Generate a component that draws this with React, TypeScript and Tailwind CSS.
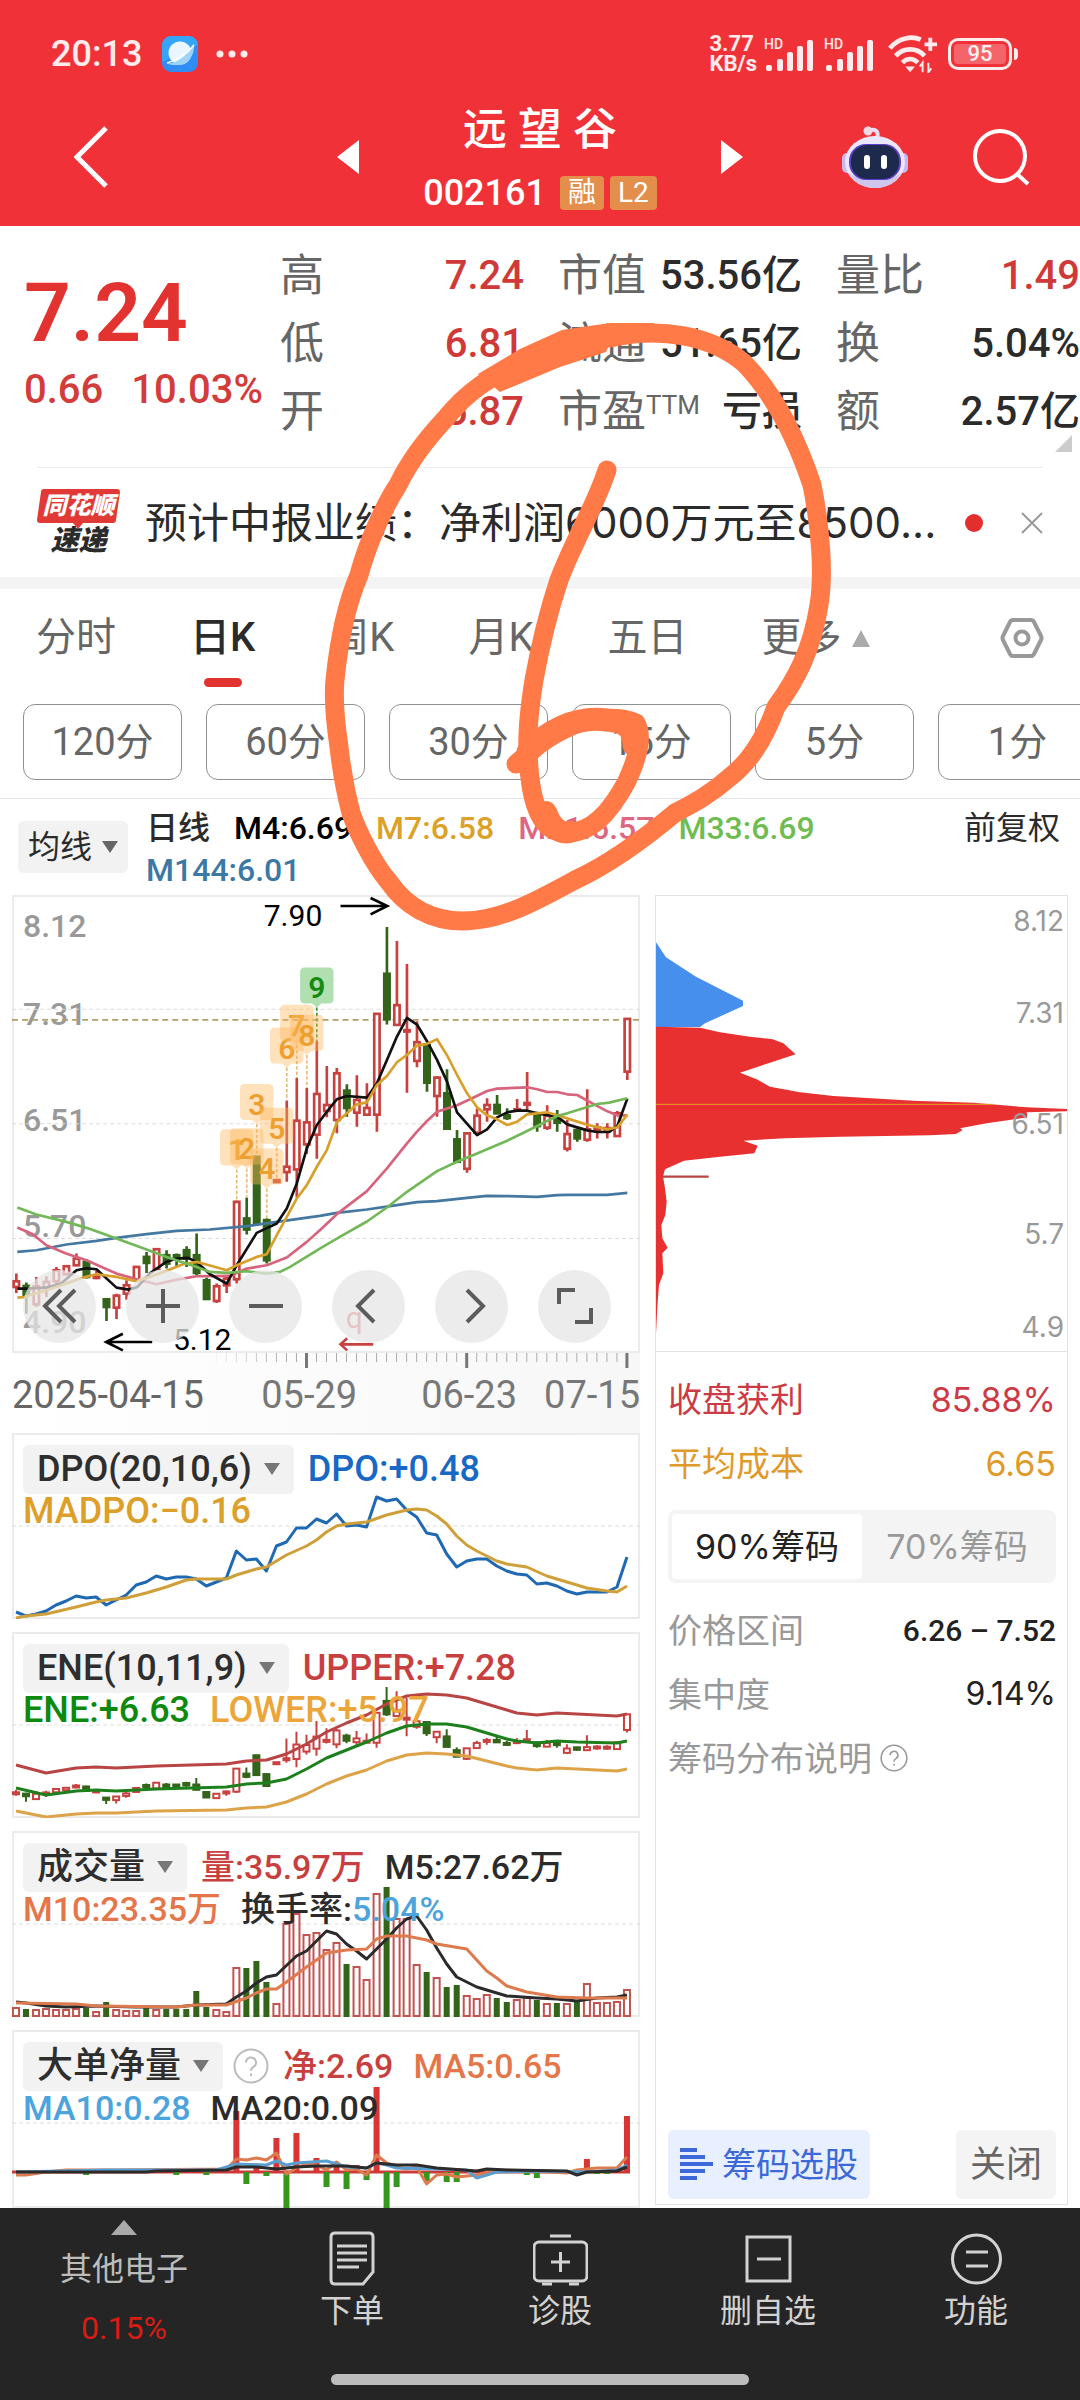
import { ReactNode } from 'react';
import clsx from 'clsx';

// [high, low, body top, body bottom, falling day]
type Candle = [number, number, number, number, number?];

const candles: Candle[] = [
  [1180, 1238, 1203, 1220],
  [1207, 1300, 1217, 1243, 1],
  [1190, 1280, 1218, 1272],
  [1188, 1250, 1205, 1222],
  [1160, 1215, 1170, 1203],
  [1155, 1185, 1158, 1182],
  [1120, 1158, 1135, 1155],
  [1137, 1195, 1145, 1190, 1],
  [1170, 1197, 1185, 1193],
  [1257, 1322, 1257, 1280, 1],
  [1240, 1316, 1246, 1282],
  [1200, 1258, 1215, 1240],
  [1158, 1205, 1160, 1200],
  [1115, 1178, 1130, 1148, 1],
  [1105, 1168, 1107, 1166],
  [1110, 1165, 1125, 1150, 1],
  [1120, 1157, 1125, 1135, 1],
  [1098, 1160, 1110, 1135, 1],
  [1060, 1185, 1125, 1178, 1],
  [1192, 1256, 1200, 1256, 1],
  [1210, 1268, 1218, 1262],
  [1185, 1238, 1195, 1215],
  [962, 1210, 965, 1197],
  [953, 1063, 1015, 1048, 1],
  [830, 1030, 830, 1030, 1],
  [1015, 1150, 1020, 1140, 1],
  [898, 908, 900, 906],
  [662, 905, 860, 876],
  [594, 952, 722, 868],
  [624, 822, 727, 793],
  [484, 836, 642, 764],
  [558, 712, 675, 693],
  [564, 760, 580, 720],
  [613, 710, 632, 684, 1],
  [586, 740, 660, 698],
  [610, 706, 684, 704],
  [400, 755, 402, 704],
  [142, 434, 282, 418, 1],
  [184, 436, 376, 435],
  [253, 638, 451, 455],
  [424, 562, 487, 543],
  [490, 635, 495, 608, 1],
  [588, 710, 593, 648],
  [568, 746, 640, 746, 1],
  [750, 845, 778, 845, 1],
  [757, 878, 760, 866],
  [685, 765, 707, 758],
  [655, 725, 675, 688],
  [645, 702, 675, 700, 1],
  [685, 720, 706, 714, 1],
  [657, 692, 688, 692],
  [576, 690, 669, 674],
  [695, 755, 700, 738, 1],
  [676, 750, 707, 743],
  [690, 755, 706, 728, 1],
  [720, 814, 762, 806],
  [745, 785, 750, 775, 1],
  [628, 785, 748, 779],
  [730, 775, 742, 750],
  [730, 775, 744, 753],
  [693, 770, 700, 768],
  [415, 600, 417, 575],
];

const averages = [
  { color: '#4478a0', points: '54,1115 111,1110 201,1093 291,1082 351,1073 441,1062 531,1052 631,1048 741,1038 831,1025 960,1007 1011,998 1101,988 1191,975 1251,966 1311,963 1401,953 1461,947 1521,948 1611,950 1671,945 1701,944 1821,944 1881,938' },
  { color: '#d8637c', points: '54,1042 100,1062 141,1095 200,1120 261,1140 351,1180 411,1197 471,1212 531,1198 591,1188 691,1187 741,1165 801,1155 861,1132 921,1085 960,1050 1011,1002 1101,933 1161,865 1221,790 1251,755 1281,723 1311,695 1371,676 1410,658 1461,633 1491,626 1581,622 1611,628 1641,636 1671,636 1701,643 1731,645 1761,662 1821,694 1851,706 1881,706' },
  { color: '#111111', points: '54,1225 81,1225 141,1222 185,1210 231,1170 261,1164 291,1167 351,1222 388,1228 414,1220 450,1180 500,1145 531,1135 565,1133 591,1145 631,1182 681,1210 711,1155 771,1058 831,1030 861,985 891,910 921,805 951,735 985,690 1011,658 1041,648 1101,653 1131,610 1161,540 1191,470 1221,414 1251,434 1281,484 1311,540 1341,605 1371,697 1431,765 1461,748 1491,712 1521,697 1551,692 1581,692 1611,700 1671,710 1701,733 1761,751 1791,756 1827,756 1851,738 1881,656' },
  { color: '#d8a02a', points: '54,1252 75,1250 141,1230 200,1210 250,1192 291,1182 351,1190 411,1203 450,1190 500,1172 550,1152 591,1145 631,1156 681,1170 711,1155 771,1130 801,1122 831,1065 861,1010 891,955 921,915 951,860 981,810 1011,727 1041,700 1071,673 1101,667 1131,615 1161,588 1191,547 1221,525 1251,497 1281,492 1311,478 1341,526 1371,585 1401,640 1431,682 1461,706 1491,718 1521,735 1551,725 1581,703 1641,697 1701,715 1761,734 1821,748 1851,742 1881,704' },
  { color: '#73b858', points: '54,982 111,1003 201,1025 261,1043 351,1075 441,1108 501,1130 591,1160 631,1175 681,1178 741,1173 801,1180 841,1175 871,1160 960,1105 1011,1075 1041,1058 1101,1024 1161,982 1221,935 1311,873 1371,845 1431,820 1521,782 1581,753 1671,708 1701,700 1791,672 1827,668 1881,655' },
];

// bar index and top of each countdown badge
const badges = [
  [22, 748], [23, 745], [24, 612], [25, 805], [26, 683], [27, 443], [28, 375], [29, 405], [30, 263],
];

const volumes = [
  10, 8, 8, 9, 8, 8, 9, 9, 6, 15, 8, 7, 7, 9, 8, 8, 8, 8, 26, 10, 8, 6, 50, 49, 56, 35, 14, 94, 104, 83, 85,
  68, 75, 53, 51, 38, 124, 130, 99, 99, 53, 45, 40, 30, 32, 22, 19, 23, 19, 15, 18, 20, 17, 14, 14, 14, 15,
  34, 15, 15, 16, 28,
];

const netFlow: [number, number][] = [
  [7, -3], [16, -3], [19, -3], [20, 4], [22, 61], [23, -12], [24, 5], [25, -4], [26, 34], [27, -40], [28, 39],
  [30, 14], [31, -15], [32, 5], [33, -17], [34, 7], [35, -8], [36, 85], [37, -40], [38, -15], [41, -9],
  [43, -10], [44, -10], [51, -3], [52, -6], [57, 13], [58, -2], [59, -2], [61, 56],
];

type Series = (number | [number, number])[];

const dpo: Series = [
  179, 183, 181, 178, 172, 168, 163, 165, 164, 172, 167, 162, 152, 149, 143, 146, 144, 144, 146, 153, 149, 145,
  118, 127, 126, 138, 113, 109, 95, 95, 86, 90, 81, 93, 92, 94, 64, 68, 66, 77, 84, 100, 102, 121, 134, 128,
  126, 126, 133, 138, 141, 142, 151, 150, 153, 158, 161, 159, 159, 159, 154, 124,
];
const madpo: Series = [
  [0, 185], [1, 183], [3, 181], [6, 174], [8, 169], [9, 167], [11, 165], [13, 160], [15, 154], [17, 147],
  [18, 146], [21, 146], [22, 142], [24, 136], [25, 134], [27, 122], [29, 113], [30, 107], [31, 99], [32, 93],
  [33, 91], [35, 89], [37, 82], [39, 77], [40, 76], [41, 77], [42, 83], [43, 91], [44, 103], [45, 112],
  [46, 118], [48, 128], [49, 131], [51, 134], [53, 143], [55, 149], [57, 155], [59, 158], [60, 159], [61, 153],
];
const eneUpper: Series = [
  [0, 133], [3, 141], [6, 136], [8, 135], [10, 136], [14, 134], [21, 132], [23, 129], [25, 128], [27, 122],
  [29, 112], [31, 100], [33, 91], [35, 83], [37, 72], [39, 64], [41, 62], [43, 63], [45, 66], [47, 72],
  [49, 78], [50, 81], [52, 83], [54, 81], [56, 82], [60, 84], [61, 82],
];
const eneMid: Series = [
  [0, 156], [3, 163], [6, 159], [8, 158], [10, 159], [14, 157], [21, 155], [23, 152], [25, 151], [27, 147],
  [29, 137], [31, 126], [33, 118], [35, 110], [37, 101], [39, 94], [41, 92], [43, 92], [45, 95], [47, 101],
  [49, 107], [50, 109], [52, 111], [54, 109], [56, 110], [60, 111], [61, 109],
];
const eneLower: Series = [
  [0, 179], [3, 185], [6, 182], [8, 181], [10, 181], [14, 179], [21, 178], [23, 176], [25, 175], [27, 170],
  [29, 162], [31, 152], [33, 144], [35, 138], [37, 129], [39, 123], [41, 121], [43, 122], [45, 124], [47, 129],
  [49, 134], [50, 136], [52, 138], [54, 136], [58, 138], [60, 139], [61, 137],
];
const vol5: Series = [
  [0, 171], [1, 172], [3, 175], [5, 176], [8, 175], [12, 176], [16, 176], [18, 174], [21, 173], [22, 166],
  [23, 160], [24, 152], [25, 146], [26, 144], [28, 125], [29, 120], [31, 100], [32, 103], [33, 113], [34, 120],
  [35, 128], [36, 118], [37, 108], [38, 97], [39, 88], [40, 85], [41, 99], [42, 117], [43, 133], [44, 146],
  [45, 151], [46, 156], [48, 162], [49, 165], [52, 167], [54, 168], [56, 170], [58, 167], [60, 166], [61, 164],
];
const vol10: Series = [
  [0, 172], [6, 173], [8, 175], [16, 176], [18, 174], [21, 174], [23, 167], [24, 162], [25, 158], [26, 158],
  [27, 151], [29, 136], [31, 122], [33, 119], [35, 118], [36, 108], [37, 105], [39, 105], [41, 109], [42, 113],
  [45, 118], [46, 129], [47, 140], [48, 147], [49, 155], [51, 161], [54, 166], [57, 167], [61, 167],
];
const net5: Series = [
  [0, 145], [1, 145], [3, 142], [5, 140], [10, 140], [21, 139], [22, 129], [23, 130], [24, 128], [25, 130],
  [26, 123], [27, 144], [28, 138], [29, 134], [30, 135], [31, 140], [32, 132], [33, 140], [34, 139], [35, 145],
  [36, 125], [37, 133], [38, 137], [39, 139], [40, 137], [41, 154], [42, 145], [43, 144], [44, 147], [46, 145],
  [48, 140], [52, 141], [55, 143], [56, 140], [58, 138], [60, 138], [61, 127],
];
const net10: Series = [
  [0, 142], [9, 140], [20, 140], [22, 134], [25, 135], [26, 131], [27, 135], [28, 133], [31, 131], [33, 137],
  [35, 138], [36, 133], [37, 135], [38, 138], [42, 139], [45, 140], [46, 148], [48, 142], [52, 141], [57, 142],
  [60, 140], [61, 135],
];
const net20: Series = [
  [0, 142], [13, 142], [14, 141], [21, 140], [22, 137], [24, 137], [26, 139], [28, 137], [30, 136], [33, 136],
  [35, 138], [36, 133], [38, 135], [40, 135], [42, 138], [46, 141], [47, 139], [49, 140], [55, 141], [56, 145],
  [57, 142], [60, 141], [61, 137],
];

const UP = '#c8413f';
const DOWN = '#33641a';
const barX = (i: number) => 4 + i * 10;

const Line = ({ data, color }: { data: Series; color: string }) => (
  <polyline
    points={data.map((d, i) => (Array.isArray(d) ? `${barX(d[0])},${d[1]}` : `${barX(i)},${d}`)).join(' ')}
    fill="none"
    stroke={color}
    strokeWidth="3"
    strokeLinejoin="round"
  />
);

const Caret = ({ className }: { className: string }) => (
  <svg viewBox="0 0 16 12" className={className} preserveAspectRatio="none" aria-hidden="true">
    <path d="M0 0h16L8 12z" fill="currentColor" />
  </svg>
);

const Help = ({ className }: { className: string }) => (
  <svg viewBox="0 0 36 36" className={className} fill="none" stroke="currentColor" strokeWidth="2">
    <circle cx="18" cy="18" r="16.5" />
    <path d="M13 14.500a5 5 0 1 1 7.500 4.300c-1.800 1-2.500 1.800-2.500 4M18 25.500v2.500" />
  </svg>
);

interface SubChartProps {
  name: string;
  help?: boolean;
  first: ReactNode;
  second: ReactNode;
  children: ReactNode;
  className?: string;
}

const SubChart = ({ name, help, first, second, children, className }: SubChartProps) => (
  <section
    className={clsx(
      'relative overflow-hidden inset-ring-2 inset-ring-[#ebebeb] font-medium whitespace-nowrap',
      className,
    )}
  >
    <svg viewBox="0 0 627 186" className="absolute top-0 left-0 w-full h-[186px]" preserveAspectRatio="none">
      <path d="M0 93H627" stroke="#dcdcdc" strokeWidth="1" strokeDasharray="4 3" />
      {children}
    </svg>
    <div className="relative pt-3 pl-[11px]">
      <div className="flex items-center gap-[14px] h-[49px]">
        <button className="flex items-center gap-3 h-full px-[14px] rounded-md bg-[#f2f2f2] text-[36px] text-[#2e2e2e]">
          {name}
          <Caret className="w-4 h-3 text-[#777]" />
        </button>
        {help && (
          <button aria-label="说明" className="-ml-1 text-[#bbb]">
            <Help className="size-9" />
          </button>
        )}
        <div className="flex gap-5">{first}</div>
      </div>
      <div className="flex gap-5 leading-[34px]">{second}</div>
    </div>
  </section>
);

const Signal = () => (
  <div className="relative w-[50px] h-[34px]">
    <span className="absolute left-0 top-0 text-[14px] leading-[14px] font-medium">HD</span>
    <svg viewBox="0 0 50 34" className="size-full" fill="currentColor">
      <rect x="2" y="28" width="6" height="6" rx="2" />
      <rect x="13" y="22" width="6" height="12" rx="2" />
      <rect x="23" y="15" width="6" height="19" rx="2" />
      <rect x="33" y="9" width="6" height="25" rx="2" />
      <rect x="43" y="3" width="6" height="31" rx="2" />
    </svg>
  </div>
);

const StatusBar = () => (
  <div className="flex items-center h-[104px] pt-1 pl-[51px] pr-[62px] text-white/90">
    <span className="text-[36px] font-medium">20:13</span>
    <svg viewBox="0 0 36 36" className="size-9 ml-5">
      <rect width="36" height="36" rx="9" fill="#2f8df5" />
      <path d="M0 14V9a9 9 0 0 1 9-9h18a9 9 0 0 1 9 9L0 26z" fill="#38b6fa" opacity="0.6" />
      <circle cx="18" cy="17" r="11.500" fill="#e9f6ff" />
      <path d="M5 27c5 2 18-4 27-19 1 8-4 21-15 21-6 0-10 0-12-2z" fill="#9fd2fb" />
      <path d="M5 27c9-2 20-9 27-18" stroke="#fff" strokeWidth="1.500" fill="none" />
    </svg>
    <svg viewBox="0 0 32 8" className="w-8 h-2 ml-[18px]" fill="currentColor">
      <circle cx="4" cy="4" r="3.500" />
      <circle cx="16" cy="4" r="3.500" />
      <circle cx="28" cy="4" r="3.500" />
    </svg>
    <div className="ml-auto text-[22px] leading-5 font-bold">
      <div>3.77</div>
      <div>KB/s</div>
    </div>
    <div className="flex items-center gap-2.5 ml-[7px]">
      <Signal />
      <Signal />
      <svg viewBox="0 0 52 38" className="w-[50px] h-[38px] ml-1" fill="none" stroke="currentColor" strokeWidth="5">
        <path d="M2 13C11 2 25 0 34 4" />
        <path d="M8 21c8-9 22-9 30 0" />
        <path d="M15 28c5-5 11-5 16 0" />
        <path d="M18 32h10l-5 6z" fill="currentColor" stroke="none" />
        <path d="M38 9h13M44 2v14" strokeWidth="4" />
        <path d="M36 38V28l-3 4M42 28v10l3-4" strokeWidth="2" />
      </svg>
      <div className="flex items-center">
        <div className="flex items-center justify-center w-16 h-8 rounded-[10px] border-[3px] border-white/90 p-[3px]">
          <span className="flex items-center justify-center size-full rounded-[4px] bg-white/25 text-[22px] leading-5 font-medium">
            95
          </span>
        </div>
        <span className="w-1 h-3 ml-0.5 rounded-r bg-white/90" />
      </div>
    </div>
  </div>
);

const TitleBar = () => (
  <div className="grid grid-cols-[1fr_406px_1fr] items-center h-[106px]">
    <button aria-label="返回" className="justify-self-start ml-[74px]">
      <svg viewBox="0 0 34 62" className="w-[34px] h-[62px]" fill="none" stroke="currentColor" strokeWidth="5">
        <path d="M32 2L3 31l29 29" />
      </svg>
    </button>
    <div className="flex items-center justify-between">
      <button aria-label="上一只">
        <svg viewBox="0 0 22 34" className="w-[22px] h-[34px]">
          <path d="M22 0v34L0 17z" fill="currentColor" />
        </svg>
      </button>
      <div className="flex flex-col items-center gap-[21px]">
        <h1 className="text-[44px] leading-[50px] font-medium">远 望 谷</h1>
        <div className="flex items-center gap-[6px] h-[34px] text-[28px]">
          <span className="mr-2 text-[36px] font-medium">002161</span>
          <span className="px-2 rounded-[4px] bg-[#e38f4b] leading-[34px]">融</span>
          <span className="px-2 rounded-[4px] bg-[#e38f4b] leading-[34px]">L2</span>
        </div>
      </div>
      <button aria-label="下一只">
        <svg viewBox="0 0 22 34" className="w-[22px] h-[34px]">
          <path d="M0 0v34l22-17z" fill="currentColor" />
        </svg>
      </button>
    </div>
    <div className="flex items-center justify-end gap-16 pr-[50px]">
      <button aria-label="助手">
        <svg viewBox="0 0 66 62" className="w-[66px] h-[62px]">
          <path d="M35 12c2-6-1-9-6-8" fill="none" stroke="#e9dcf5" strokeWidth="4" strokeLinecap="round" />
          <circle cx="26" cy="5" r="4.500" fill="#f3d9e6" />
          <rect x="0" y="27" width="10" height="20" rx="5" fill="#c9b7ee" />
          <rect x="56" y="27" width="10" height="20" rx="5" fill="#c9b7ee" />
          <ellipse cx="33" cy="36" rx="30" ry="26" fill="#ece6fb" />
          <path d="M6 46c5 10 15 16 27 16s22-6 27-16c-8 10-46 10-54 0z" fill="#cfc6ee" />
          <rect x="7" y="18" width="52" height="36" rx="17" fill="#5b3fc4" />
          <rect x="9" y="19" width="48" height="34" rx="16" fill="#1d2a4d" />
          <rect x="22" y="29" width="6" height="14" rx="3" fill="#fff" />
          <rect x="39" y="29" width="6" height="14" rx="3" fill="#fff" />
        </svg>
      </button>
      <button aria-label="搜索">
        <svg viewBox="0 0 58 58" className="size-[58px]" fill="none" stroke="currentColor" strokeWidth="4">
          <circle cx="28" cy="28" r="25" />
          <path d="M45 46l11 10" />
        </svg>
      </button>
    </div>
  </div>
);

const Stat = ({ label, sup, value, red }: { label: string; sup?: string; value: string; red?: boolean }) => (
  <div className="flex items-center justify-between h-[68px]">
    <dt className="text-[44px] text-[#666]">
      {label}
      {sup && <sup className="text-[26px] leading-none">{sup}</sup>}
    </dt>
    <dd className={clsx('text-[40px] font-medium', red ? 'text-[#cf3a38]' : 'text-[#2b2b2b]')}>{value}</dd>
  </div>
);

const Quote = () => (
  <section className="relative flex pl-6 pt-4 pb-[21px] whitespace-nowrap">
    <div className="w-[256px] shrink-0 pt-[31px] text-[#e23331]">
      <div className="text-[82px] leading-[80px] font-semibold">7.24</div>
      <div className="flex gap-7 mt-[17px] text-[40px] leading-10 font-medium text-[#d23c3a]">
        <span>0.66</span>
        <span>10.03%</span>
      </div>
    </div>
    <dl className="grid grid-cols-3 gap-x-[34px] flex-1">
      <Stat label="高" value="7.24" red />
      <Stat label="市值" value="53.56亿" />
      <Stat label="量比" value="1.49" red />
      <Stat label="低" value="6.81" red />
      <Stat label="流通" value="51.65亿" />
      <Stat label="换" value="5.04%" />
      <Stat label="开" value="6.87" red />
      <Stat label="市盈" sup="TTM" value="亏损" />
      <Stat label="额" value="2.57亿" />
    </dl>
    <svg viewBox="0 0 17 17" className="absolute right-2 bottom-[15px] size-[17px]">
      <path d="M17 0v17H0z" fill="#ccc" />
    </svg>
  </section>
);

const News = () => (
  <a href="#news" className="flex items-center h-[110px] mx-[37px] border-t border-[#ececec] font-[Inter,'Noto_Sans_CJK_SC',sans-serif]">
    <span className="relative flex flex-col items-center w-[83px] shrink-0 italic font-black">
      <svg viewBox="0 0 83 40" className="absolute top-0 left-0 w-[83px] h-10">
        <path d="M7 0h73q3 0 3 3l-4 28q0 3-3 3H46l-5 6-5-6H3q-3 0-3-3L4 3q0-3 3-3z" fill="#e13a36" />
      </svg>
      <span className="relative text-[24px] leading-[34px] text-white">同花顺</span>
      <span className="text-[28px] leading-[34px] text-[#2b2b2b]">速递</span>
    </span>
    <span className="flex-1 ml-[25px] text-[42px] text-[#2b2b2b] whitespace-nowrap">
      预计中报业绩：净利润6000万元至8500...
    </span>
    <span className="size-[18px] mr-[38px] rounded-full bg-[#e32e2e]" />
    <svg viewBox="0 0 22 22" className="size-[22px]" stroke="#999" strokeWidth="2">
      <path d="M1 1l20 20M21 1L1 21" />
    </svg>
  </a>
);

const tabs = ['分时', '日K', '周K', '月K', '五日', '更多'];
const minutes = ['120分', '60分', '30分', '15分', '5分', '1分'];

const Periods = () => (
  <section className="pb-[18px] border-t-[12px] border-b border-t-[#f4f4f4] border-b-[#e3e3e3]">
    <nav className="flex items-center gap-[74px] h-[98px] pl-9 pr-9 text-[40px] text-[#666]">
      {tabs.map((tab) => (
        <button
          key={tab}
          className={clsx(
            'relative flex items-center gap-2.5 h-full whitespace-nowrap',
            tab === '日K' && 'font-medium text-[#2b2b2b]',
          )}
        >
          {tab}
          {tab === '更多' && <Caret className="w-[18px] h-[17px] rotate-180 text-[#aaa]" />}
          {tab === '日K' && (
            <span className="absolute bottom-0 left-1/2 w-[38px] h-[9px] -translate-x-1/2 rounded-full bg-[#e23331]" />
          )}
        </button>
      ))}
      <button aria-label="设置" className="ml-auto text-[#999]">
        <svg viewBox="0 0 44 42" className="w-11 h-[42px]" fill="none" stroke="currentColor" strokeWidth="4">
          <path d="M13 3h18q2 0 3 2l7 14q1 2 0 4l-7 14q-1 2-3 2H13q-2 0-3-2L3 23q-1-2 0-4l7-14q1-2 3-2z" />
          <circle cx="22" cy="21" r="6.500" />
        </svg>
      </button>
    </nav>
    <div className="flex gap-6 mt-[17px] pl-[23px] overflow-hidden">
      {minutes.map((m) => (
        <button key={m} className="w-[159px] h-[76px] shrink-0 rounded-xl border border-[#8f8f8f] text-[38px] text-[#666]">
          {m}
        </button>
      ))}
    </div>
  </section>
);

const AverageBar = () => (
  <section className="flex items-start h-24 pl-[18px] pr-5 text-[32px] text-[#2b2b2b] whitespace-nowrap">
    <button className="flex items-center gap-2.5 h-[52px] mt-[22px] px-[10px] rounded-md bg-[#f2f2f2]">
      均线
      <Caret className="w-4 h-3 text-[#666]" />
    </button>
    <div className="flex-1 flex flex-wrap gap-x-6 pt-2 pl-[18px] leading-[42px] font-medium">
      <span>日线</span>
      <span className="text-black">M4:6.69</span>
      <span className="text-[#dba128]">M7:6.58</span>
      <span className="text-[#dd6781]">M21:6.57</span>
      <span className="text-[#6fbc51]">M33:6.69</span>
      <span className="text-[#3b78a6]">M144:6.01</span>
    </div>
    <button className="pt-2 leading-[42px]">前复权</button>
  </section>
);

const chartButtons = [
  { label: '最早', d: 'M19 2L3 18l16 16M33 2L17 18l16 16' },
  { label: '放大', d: 'M1 18h34M18 1v34' },
  { label: '缩小', d: 'M1 18h34' },
  { label: '向左', d: 'M23 2L7 18l16 16' },
  { label: '向右', d: 'M13 2l16 16-16 16' },
  { label: '全屏', d: 'M2 16V2h16M34 20v14H18' },
];

const MainChart = () => (
  <section className="relative inset-ring-2 inset-ring-[#ebebeb]">
    <div className="text-[32px] leading-10 font-medium text-[#999]">
      <span className="absolute left-[11px] top-[11px]">8.12</span>
      <span className="absolute left-[11px] top-[99px]">7.31</span>
      <span className="absolute left-[11px] top-[205px]">6.51</span>
      <span className="absolute left-[11px] top-[311px]">5.70</span>
      <span className="absolute left-[11px] top-[407px]">4.90</span>
    </div>
    <svg viewBox="38 46 1881 1371" className="relative block w-full overflow-visible">
      <path d="M38 388H1919M38 731H1919M38 1075H1919" stroke="#dcdcdc" strokeWidth="3" strokeDasharray="12 9" />
      <path d="M38 420H1919" stroke="#b39d6d" strokeWidth="5" strokeDasharray="18 12" />
      {badges.map(([i, top], n) => (
        <path
          key={i}
          d={`M${51 + i * 30} ${top + 120}V${candles[i][0]}`}
          stroke={n === 8 ? '#3d8f3d' : '#e5b978'}
          strokeWidth="5"
          strokeDasharray="10 6"
        />
      ))}
      {candles.map(([high, low, top, bottom, down], i) => {
        const x = 51 + i * 30;
        return (
          <g key={i} stroke={down ? DOWN : UP} strokeWidth="8" fill={down ? DOWN : '#fff'}>
            <path d={`M${x} ${high}V${top}M${x} ${bottom}V${low}`} />
            <rect x={x - 8} y={top} width="16" height={Math.max(bottom - top, 3)} />
          </g>
        );
      })}
      {averages.map((line) => (
        <polyline key={line.color} points={line.points} fill="none" stroke={line.color} strokeWidth="8" strokeLinejoin="round" />
      ))}
      {badges.map(([i, top], n) => {
        const x = 51 + i * 30;
        return (
          <g key={i}>
            <path
              d={`M${x - 36} ${top}h72q14 0 14 14v80q0 14-14 14h-22l-14 12-14-12h-22q-14 0-14-14v-80q0-14 14-14z`}
              fill={n === 8 ? '#7ccb7c' : '#ffb85c'}
              opacity={n === 8 ? 0.6 : 0.42}
            />
            <text
              x={x}
              y={top + 93}
              textAnchor="middle"
              fontSize="90"
              fontWeight="600"
              fill={n === 8 ? '#158a15' : '#eda02f'}
            >
              {n + 1}
            </text>
          </g>
        );
      })}
      <g fill="none" stroke="#000" strokeWidth="8">
        <path d="M1022 79H1160M1112 55l50 24-50 25" />
        <path d="M458 1385H322M370 1360l-50 25 50 25" />
        <path d="M1120 1392H1026M1042 1374l-20 18 20 18" stroke="#c8413f" />
      </g>
      <text x="792" y="140" fontSize="90">7.90</text>
      <text x="520" y="1410" fontSize="90">5.12</text>
      <text x="1038" y="1344" fontSize="90" fill="#dd6060">q</text>
    </svg>
    <div className="absolute left-[11px] bottom-[10px] flex gap-[30px]">
      {chartButtons.map((b) => (
        <button key={b.label} aria-label={b.label} className="flex items-center justify-center size-[73px] rounded-full bg-[#e6e6e6]/75">
          <svg viewBox="0 0 36 36" className="size-9" fill="none" stroke="#5c5c5c" strokeWidth="4">
            <path d={b.d} />
          </svg>
        </button>
      ))}
    </div>
  </section>
);

const DateAxis = () => (
  <div className="h-20 bg-gradient-to-r from-white to-[#f7f7f7] text-[38px] leading-10 text-[#777]">
    <svg viewBox="0 0 627 22" className="block w-full">
      {candles.slice(20).map((_, n) => {
        const i = n + 20;
        const major = i === 29 || i === 45 || i === 61;
        return (
          <path
            key={i}
            d={`M${barX(i)} 0V${major ? 15 : 9}`}
            stroke={major ? '#777' : '#aaa'}
            strokeWidth={major ? 3 : 1}
            opacity={Math.min(1, (i - 19) / 8)}
          />
        );
      })}
    </svg>
    <div className="flex">
      <span className="text-[#666]">2025-04-15</span>
      <span className="ml-auto mr-[64px]">05-29</span>
      <span className="mr-[27px]">06-23</span>
      <span>07-15</span>
    </div>
  </div>
);

// the price chart squeezed into the ENE pane
const eneY = (v: number) => 55 + (v - 142) * 0.0992;

const Indicators = () => (
  <div className="flex flex-col gap-[13px]">
    <SubChart
      name="DPO(20,10,6)"
      className="h-[186px] text-[36px]"
      first={<span className="text-[#1769c5]">DPO:+0.48</span>}
      second={<span className="text-[#dca02a]">MADPO:−0.16</span>}
    >
      <Line data={dpo} color="#1f69b3" />
      <Line data={madpo} color="#cfa03a" />
    </SubChart>
    <SubChart
      name="ENE(10,11,9)"
      className="h-[186px] text-[36px]"
      first={<span className="text-[#c83f40]">UPPER:+7.28</span>}
      second={
        <>
          <span className="text-[#0d8a0d]">ENE:+6.63</span>
          <span className="text-[#eba538]">LOWER:+5.97</span>
        </>
      }
    >
      {candles.map(([high, low, top, bottom, down], i) => (
        <g key={i} stroke={down ? DOWN : UP} strokeWidth="2" fill={down ? DOWN : '#fff'}>
          <path d={`M${barX(i)} ${eneY(high)}V${eneY(top)}M${barX(i)} ${eneY(bottom)}V${eneY(low)}`} />
          <rect x={barX(i) - 3} y={eneY(top)} width="6" height={Math.max((bottom - top) * 0.0992, 2)} />
        </g>
      ))}
      <Line data={eneUpper} color="#b84444" />
      <Line data={eneMid} color="#1d801d" />
      <Line data={eneLower} color="#dda348" />
    </SubChart>
    <SubChart
      name="成交量"
      className="h-[186px] text-[34px]"
      first={
        <>
          <span className="text-[#c83f40]">量:35.97万</span>
          <span className="text-[#2b2b2b]">M5:27.62万</span>
        </>
      }
      second={
        <>
          <span className="text-[#e4764a]">M10:23.35万</span>
          <span className="text-[#2b2b2b]">
            换手率:<span className="text-[#4ca4dc]">5.04%</span>
          </span>
        </>
      }
    >
      {volumes.map((h, i) =>
        candles[i][4] ? (
          <rect key={i} x={barX(i) - 3} y={186 - h} width="6" height={h} fill={DOWN} />
        ) : (
          <rect key={i} x={barX(i) - 3} y={187 - h} width="6" height={h - 2} fill="#fff" stroke="#c25450" strokeWidth="2" />
        ),
      )}
      <Line data={vol5} color="#2b2b2b" />
      <Line data={vol10} color="#dd7a4e" />
    </SubChart>
    <SubChart
      name="大单净量"
      help
      className="h-[178px] text-[34px]"
      first={
        <>
          <span className="text-[#c83f40]">净:2.69</span>
          <span className="text-[#e4764a]">MA5:0.65</span>
        </>
      }
      second={
        <>
          <span className="text-[#4ca4dc]">MA10:0.28</span>
          <span className="text-[#2b2b2b]">MA20:0.09</span>
        </>
      }
    >
      <path d="M0 142H617" stroke="#cc3a38" strokeWidth="3" />
      {netFlow.map(([i, v]) => (
        <rect
          key={i}
          x={barX(i) - 3}
          y={v > 0 ? 142 - v : 142}
          width="6"
          height={Math.abs(v)}
          fill={v > 0 ? '#d93535' : '#36971f'}
        />
      ))}
      <Line data={net5} color="#dd7a4e" />
      <Line data={net10} color="#5b9fd0" />
      <Line data={net20} color="#2b2b2b" />
    </SubChart>
  </div>
);

const ChipRow = ({ label, value, className }: { label: ReactNode; value?: ReactNode; className: string }) => (
  <div className={clsx('flex items-center justify-between h-16', className)}>
    <span>{label}</span>
    {value}
  </div>
);

const ChipPanel = () => (
  <aside className="flex flex-col mb-[3px] border border-[#e2e2e2] text-[34px] whitespace-nowrap font-[Inter,'Noto_Sans_CJK_SC',sans-serif]">
    <div className="relative border-b border-[#e2e2e2]">
      <svg viewBox="48 48 1233 1365" className="block w-full">
        <path d="M48 187L78 232L168 290L309 362V378L195 430L180 441H48z" fill="#468fec" />
        <path
          d="M48 440L180 443L240 457L330 470L398 478L430 490L450 508L467 523L390 548L300 578L350 598L390 620L480 637L580 648L820 662L1000 668L1160 682L1281 687V694L1160 697L1162 712L1040 730L960 745L968 750L948 762L870 766L600 770L435 775L310 782L353 797L343 820L240 830L132 842L75 868L70 886L70 895L75 925L80 965L76 1005L64 1035L67 1075L83 1103L67 1120L70 1180L57 1215L52 1280L48 1362z"
          fill="#e83030"
        />
        <path d="M66 890H206" stroke="#b94444" strokeWidth="7" />
        <path d="M48 673H1060" stroke="#eb9a2c" strokeWidth="3" />
      </svg>
      <div className="text-[28px] leading-10 text-[#999]">
        <span className="absolute right-[3px] top-[5px]">8.12</span>
        <span className="absolute right-[3px] top-[97px]">7.31</span>
        <span className="absolute right-[3px] top-[208px]">6.51</span>
        <span className="absolute right-[3px] top-[318px]">5.7</span>
        <span className="absolute right-[3px] top-[411px]">4.9</span>
      </div>
    </div>
    <div className="flex flex-col flex-1 pl-3 pr-[11px] pt-[15px] pb-[5px]">
      <ChipRow className="text-[#cc3a46]" label="收盘获利" value="85.88%" />
      <ChipRow className="text-[#e09a2a]" label="平均成本" value="6.65" />
      <div className="grid grid-cols-2 my-[15px] p-1 rounded-lg bg-[#f4f4f4]">
        <button className="h-[65px] rounded-[4px] bg-white text-[#222]">90%筹码</button>
        <button className="h-[65px] text-[#999]">70%筹码</button>
      </div>
      <ChipRow
        className="text-[#999]"
        label="价格区间"
        value={<span className="font-[Roboto] text-[30px] font-medium text-[#222]">6.26 – 7.52</span>}
      />
      <ChipRow className="text-[#999]" label="集中度" value={<span className="text-[32px] text-[#222]">9.14%</span>} />
      <a href="#chips" className="flex items-center gap-2 h-16 text-[#999]">
        筹码分布说明
        <Help className="size-7" />
      </a>
      <div className="flex justify-between mt-auto">
        <button className="flex items-center gap-2 h-[69px] px-3 rounded-md bg-[#e8effe] text-[#3d68d8]">
          <svg viewBox="0 0 34 34" className="size-[34px]" stroke="currentColor" strokeWidth="4">
            <path d="M0 3h17M0 10h25M0 17h33M0 24h25M0 31h17" />
          </svg>
          筹码选股
        </button>
        <button className="h-[69px] px-[14px] rounded-md bg-[#f4f4f4] text-[36px] text-[#666]">关闭</button>
      </div>
    </div>
  </aside>
);

const actions = [
  {
    label: '下单',
    icon: (
      <>
        <path d="M10 3h34q4 0 4 4v35L38 54H10q-4 0-4-4V7q0-4 4-4z" />
        <path d="M12 16h30M12 23h30M12 30h30M12 37h22" />
      </>
    ),
  },
  {
    label: '诊股',
    icon: (
      <>
        <rect x="1" y="12" width="53" height="39" rx="5" />
        <path d="M17 6h21M27.500 22v20M18 32h19M9 54h10M36 54h10" />
      </>
    ),
  },
  {
    label: '删自选',
    icon: <path d="M6 7h43v44H6zM16 29h24" />,
  },
  {
    label: '功能',
    icon: (
      <>
        <circle cx="27.500" cy="29" r="24" />
        <path d="M17 22h22M17 36h22" />
      </>
    ),
  },
];

const BottomBar = () => (
  <footer className="h-[193px] bg-[#252525] text-[32px] text-[#d2d2d2]">
    <div className="grid grid-cols-[248fr_208fr_208fr_208fr_208fr] h-[166px]">
      <button className="flex flex-col items-center pt-3">
        <Caret className="w-[26px] h-[15px] rotate-180 text-[#aaa]" />
        <span className="mt-3 leading-[44px] text-[#bcbcbc]">其他电子</span>
        <span className="mt-[15px] leading-[44px] text-[#d91c14]">0.15%</span>
      </button>
      {actions.map((a) => (
        <button key={a.label} className="flex flex-col items-center pt-[22px]">
          <svg viewBox="0 0 55 58" className="w-[55px] h-[58px]" fill="none" stroke="currentColor" strokeWidth="3">
            {a.icon}
          </svg>
          <span className="leading-[46px]">{a.label}</span>
        </button>
      ))}
    </div>
    <div className="w-[418px] h-[11px] mx-auto rounded-full bg-[#bdbdbd]" />
  </footer>
);

// hand-drawn circled six lying over the page
const Scribble = () => (
  <svg
    viewBox="0 0 1080 960"
    className="absolute top-0 left-0 w-full pointer-events-none"
    fill="none"
    stroke="#ff7a46"
    strokeWidth="19"
    strokeLinecap="round"
    strokeLinejoin="round"
  >
    <path d="M610 338C660 326 712 336 744 363C775 395 797 440 812 485C821 530 824 575 819 605C812 650 796 680 776 707C766 735 752 760 730 777C710 795 690 805 675 813C645 838 610 864 575 880C535 902 500 921 463 921C430 921 405 905 389 882C372 862 357 830 351 813C345 790 341 765 339 747C335 720 333 700 335 680C338 650 344 610 359 575C367 545 383 508 398 485C410 460 430 435 446 418C465 394 490 375 532 358C560 345 585 338 610 338" />
    <path d="M478 374L520 349L562 330L610 323L654 323V342L610 343L606 352L560 367L500 392z" fill="#ff7a46" stroke="none" />
    <path d="M607 470C596 505 574 540 559 580C548 613 540 647 534 680C530 705 527 730 528 750C529 785 534 833 566 833C592 833 610 812 626 783C638 758 643 735 636 723C620 716 590 716 565 729C545 738 530 752 516 764" />
    <path d="M528 752C545 732 575 716 606 720C625 721 634 728 634 745" strokeWidth="23" />
    <path d="M546 812C552 828 560 834 570 832" strokeWidth="22" />
  </svg>
);

const App = () => (
  <div className="relative overflow-hidden bg-white font-[Roboto,'Noto_Sans_CJK_SC',sans-serif]">
    <header className="pb-4 bg-[#f03238] text-white">
      <StatusBar />
      <TitleBar />
    </header>
    <Quote />
    <News />
    <Periods />
    <AverageBar />
    <main className="grid grid-cols-[628fr_413fr] gap-[15px] pl-3 pr-3">
      <div className="min-w-0">
        <MainChart />
        <DateAxis />
        <Indicators />
      </div>
      <ChipPanel />
    </main>
    <BottomBar />
    <Scribble />
  </div>
);

export default App;
